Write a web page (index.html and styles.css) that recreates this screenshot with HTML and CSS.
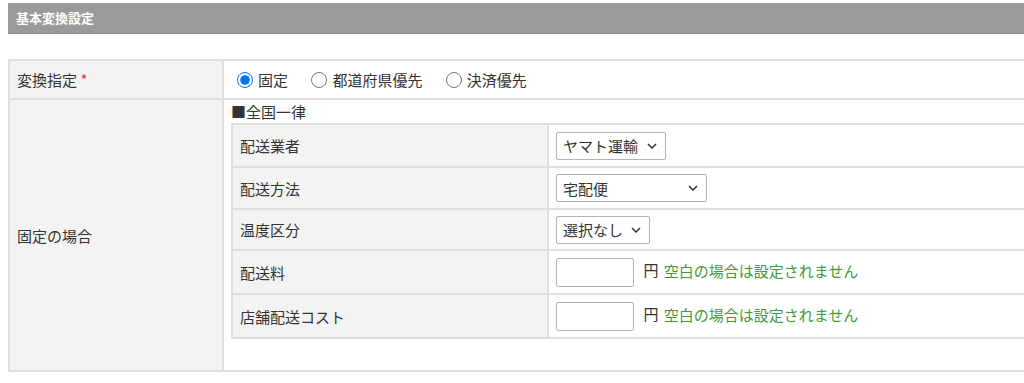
FILE: index.html
```html
<!DOCTYPE html>
<html lang="ja">
<head>
  <meta charset="UTF-8" />
  <meta name="viewport" content="width=device-width, initial-scale=1.0"/>
  <title>基本変換設定</title>
  <link rel="stylesheet" href="styles.css">
</head>
<body>

  <h2 class="section-title">基本変換設定</h2>

  <table class="form-table">
    <tr class="row-mode">
      <th>変換指定 <span class="required">*</span></th>
      <td>
        <label class="radio"><input type="radio" name="mode" value="fixed" checked>固定</label>
        <label class="radio"><input type="radio" name="mode" value="pref">都道府県優先</label>
        <label class="radio"><input type="radio" name="mode" value="payment">決済優先</label>
      </td>
    </tr>
    <tr class="row-fixed">
      <th>固定の場合</th>
      <td>
        <p class="group-title">■全国一律</p>
        <table class="sub-table">
          <tr>
            <th>配送業者</th>
            <td>
              <select class="select-carrier">
                <option>ヤマト運輸</option>
                <option>佐川急便</option>
                <option>日本郵便</option>
              </select>
            </td>
          </tr>
          <tr>
            <th>配送方法</th>
            <td>
              <select class="select-method">
                <option>宅配便</option>
                <option>メール便</option>
              </select>
            </td>
          </tr>
          <tr class="row-last-select">
            <th>温度区分</th>
            <td>
              <select class="select-temp">
                <option>選択なし</option>
                <option>冷蔵</option>
                <option>冷凍</option>
              </select>
            </td>
          </tr>
          <tr class="row-input">
            <th>配送料</th>
            <td>
              <input type="text" class="yen-input">
              <span class="unit">円</span>
              <span class="note">空白の場合は設定されません</span>
            </td>
          </tr>
          <tr class="row-input">
            <th>店舗配送コスト</th>
            <td>
              <input type="text" class="yen-input">
              <span class="unit">円</span>
              <span class="note">空白の場合は設定されません</span>
            </td>
          </tr>
        </table>
      </td>
    </tr>
  </table>

</body>
</html>
```

FILE: styles.css
```css
body {
  margin: 0;
  font-family: "Noto Sans CJK JP", "Noto Sans", sans-serif;
  font-size: 15px;
  color: #333;
  background: #fff;
  overflow: hidden;
}

.section-title {
  margin: 3px 0 0 8px;
  width: 1100px;
  height: 30px;
  line-height: 30px;
  padding-left: 8px;
  background: #9a9a9a;
  border-bottom: 1px solid #8a8a8a;
  color: #fff;
  font-size: 13px;
  font-weight: bold;
}

.form-table {
  margin: 25px 0 0 8px;
  width: 1200px;
  table-layout: fixed;
  border-collapse: collapse;
}

.form-table > tbody > tr > th,
.form-table > tbody > tr > td {
  border: 2px solid #dedede;
}

.form-table > tbody > tr > th {
  width: 198px;
  padding: 0 7px;
  background: #f3f3f3;
  font-weight: normal;
  text-align: left;
  vertical-align: middle;
}

.form-table > tbody > tr > td {
  padding: 0 0 0 7px;
}

.row-mode {
  height: 39px;
}

.row-fixed > td {
  padding-bottom: 31px !important;
}

.required {
  color: #e53935;
}

.radio {
  display: inline-flex;
  align-items: center;
  margin-right: 14px;
  position: relative;
  top: 1px;
}

.radio input {
  width: 16px;
  height: 16px;
  margin: 0 5px 0 6px;
}

.group-title {
  margin: 1px 0 0;
  line-height: 22px;
}

.sub-table {
  width: 100%;
  table-layout: fixed;
  border-collapse: collapse;
}

.sub-table th,
.sub-table td {
  border: 2px solid #dedede;
  height: 40px;
}

.sub-table tr:first-child th,
.sub-table tr:first-child td {
  height: 41px;
}

.sub-table .row-last-select th,
.sub-table .row-last-select td {
  height: 39px;
}

.sub-table th {
  width: 300px;
  padding: 0 7px;
  background: #f3f3f3;
  font-weight: normal;
  text-align: left;
}

.sub-table td {
  padding: 0 7px;
}

.sub-table .row-input th,
.sub-table .row-input td {
  height: 42px;
}

select {
  appearance: none;
  height: 28px;
  font-family: inherit;
  font-size: 15px;
  color: #333;
  border: 1px solid #b5b5b5;
  border-radius: 2px;
  padding: 0 20px 0 6px;
  background: #fff url("data:image/svg+xml,%3Csvg xmlns='http://www.w3.org/2000/svg' width='10' height='6' viewBox='0 0 10 6'%3E%3Cpolyline points='1,1 5,5 9,1' fill='none' stroke='%23333' stroke-width='1.5'/%3E%3C/svg%3E") no-repeat right 8px center;
  vertical-align: middle;
}

.select-carrier { width: 110px; }
.select-method { width: 151px; }
.select-temp { width: 94px; }

.yen-input {
  width: 78px;
  height: 29px;
  box-sizing: border-box;
  border: 1px solid #b5b5b5;
  border-radius: 2px;
  margin: 0 6px 0 0;
  vertical-align: middle;
}

.unit {
  margin-right: 2px;
}

.note {
  color: #3f9b3a;
}
```
